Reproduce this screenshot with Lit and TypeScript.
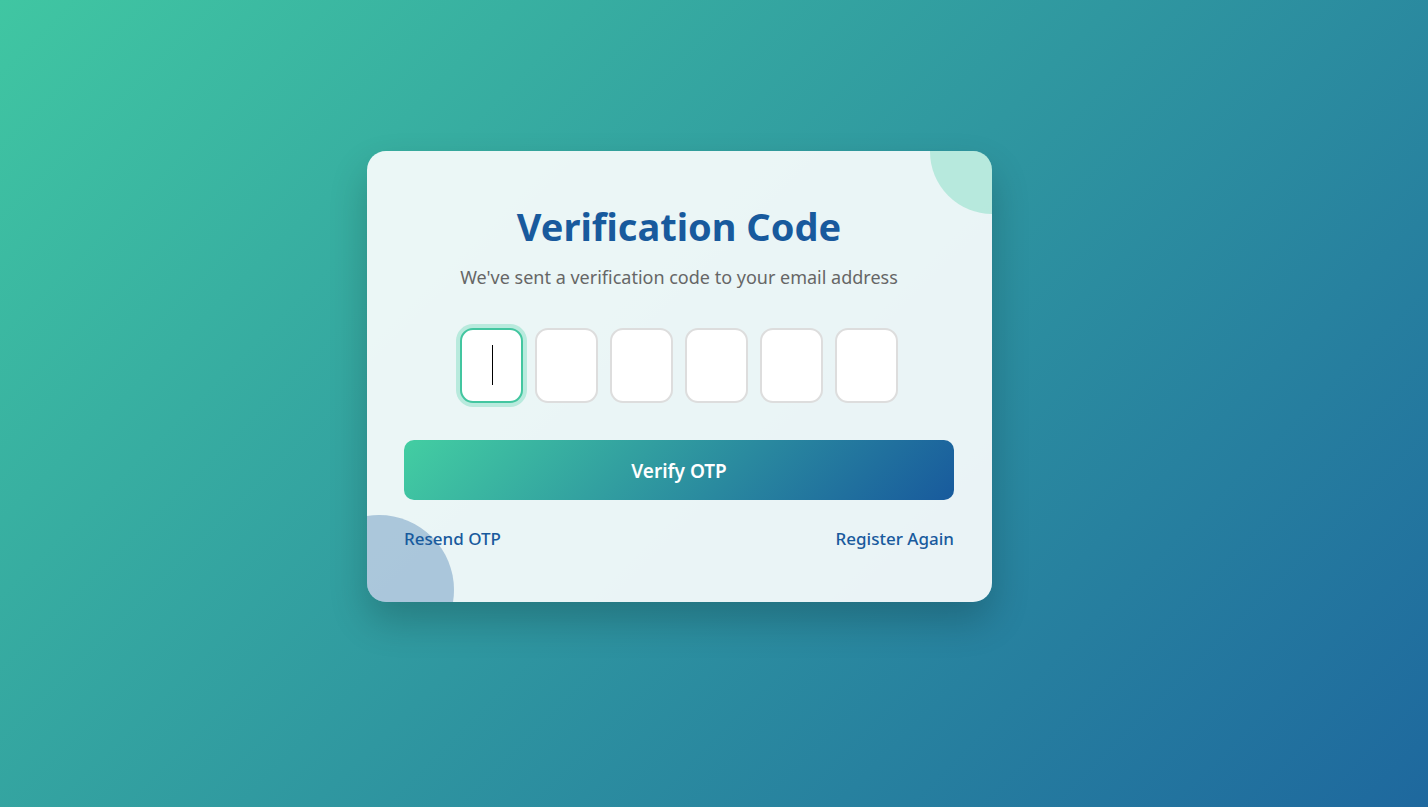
import { LitElement, html, css } from "lit";
import { customElement, state } from "lit/decorators.js";
import { classMap } from "lit/directives/class-map.js";

const CODE_LENGTH = 6;

@customElement("otp-fields")
class OtpFields extends LitElement {
  @state() private digits: string[] = Array(CODE_LENGTH).fill("");
  @state() private active = 0;

  static styles = css`
    :host {
      display: block;
    }
    .row {
      display: flex;
      justify-content: center;
      gap: 12px;
      margin: 0;
      padding: 0;
      border: 0;
    }
    .slot {
      position: relative;
      display: block;
    }
    .digit {
      display: block;
      box-sizing: border-box;
      width: 63px;
      height: 75px;
      padding: 0;
      border: 2px solid #ddd;
      border-radius: 13px;
      background: #fff;
      color: #185a9d;
      caret-color: transparent;
      font: 600 30px "Noto Sans", sans-serif;
      text-align: center;
      outline: none;
    }
    .active .digit {
      border-color: #43c6a0;
      box-shadow: 0 0 0 4px rgba(67, 206, 162, 0.3);
    }
    .active.empty::after {
      content: "";
      position: absolute;
      inset: 17px auto 18px 32px;
      width: 1px;
      background: #000;
      pointer-events: none;
    }
  `;

  firstUpdated() {
    this.focusField(0);
  }

  private focusField(i: number) {
    this.renderRoot.querySelectorAll("input")[i]?.focus();
  }

  private onInput(i: number, e: Event) {
    const value = (e.target as HTMLInputElement).value;
    this.digits = this.digits.map((d, n) => (n === i ? value : d));
    if (value) this.focusField(i + 1);
  }

  private onKey(i: number, e: KeyboardEvent) {
    if (e.key === "Backspace" && !this.digits[i]) this.focusField(i - 1);
  }

  render() {
    return html`<div class="row" role="group" aria-label="Verification Code">
      ${this.digits.map(
        (d, i) => html`<label
          class=${classMap({ slot: true, active: i === this.active, empty: !d })}
          ><input
            class="digit"
            type="text"
            inputmode="numeric"
            maxlength="1"
            aria-label=${`Digit ${i + 1}`}
            .value=${d}
            @focus=${() => (this.active = i)}
            @input=${(e: Event) => this.onInput(i, e)}
            @keydown=${(e: KeyboardEvent) => this.onKey(i, e)}
        /></label>`
      )}
    </div>`;
  }
}

@customElement("app-root")
class AppRoot extends LitElement {
  static styles = css`
    :host {
      box-sizing: border-box;
      display: flex;
      align-items: center;
      justify-content: center;
      min-height: 100vh;
      padding: 0 69px 54px 0;
      background: linear-gradient(135deg, #40c6a2 0%, #1e689e 100%);
      font-family: "Noto Sans", "Open Sans", sans-serif;
    }
    .card {
      position: relative;
      z-index: 0;
      box-sizing: border-box;
      width: 100%;
      max-width: 625px;
      padding: 50px 38px 51px 37px;
      border-radius: 19px;
      overflow: hidden;
      background: rgba(255, 255, 255, 0.9);
      text-align: center;
    }
    .shadow {
      width: 100%;
      max-width: 625px;
      border-radius: 19px;
      box-shadow: 0 19px 38px rgba(0, 0, 0, 0.2);
    }
    .card::before,
    .card::after {
      content: "";
      position: absolute;
      z-index: -1;
      border-radius: 50%;
      opacity: 0.3;
    }
    .card::before {
      top: -62px;
      right: -63px;
      width: 125px;
      height: 125px;
      background: #43cea2;
    }
    .card::after {
      bottom: -63px;
      left: -63px;
      width: 150px;
      height: 150px;
      background: #185a9d;
    }
    .title {
      margin: 0 0 14px;
      color: #185a9d;
      font-size: 38px;
      line-height: 50px;
      font-weight: 700;
    }
    .lead {
      margin: 0 0 38px;
      color: #666;
      font-size: 18px;
      line-height: 25px;
    }
    .submit {
      display: block;
      width: 100%;
      height: 60px;
      margin: 37px 0 26px;
      padding: 2px 0 0;
      border: 0;
      border-radius: 10px;
      background: linear-gradient(135deg, #43cea2, #185a9d);
      color: #fff;
      font: 600 19px "Noto Sans", "Open Sans", sans-serif;
      cursor: pointer;
    }
    .links {
      display: flex;
      justify-content: space-between;
    }
    .link {
      color: #185a9d;
      font-size: 17px;
      line-height: 25px;
      font-weight: 500;
      text-decoration: none;
    }
  `;

  render() {
    return html`<div class="shadow">
      <main class="card">
        <h1 class="title">Verification Code</h1>
        <p class="lead">We've sent a verification code to your email address</p>
        <form @submit=${(e: Event) => e.preventDefault()}>
          <otp-fields></otp-fields>
          <button class="submit" type="submit">Verify OTP</button>
        </form>
        <nav class="links">
          <a class="link" href="#resend">Resend OTP</a>
          <a class="link" href="#register">Register Again</a>
        </nav>
      </main>
    </div>`;
  }
}
